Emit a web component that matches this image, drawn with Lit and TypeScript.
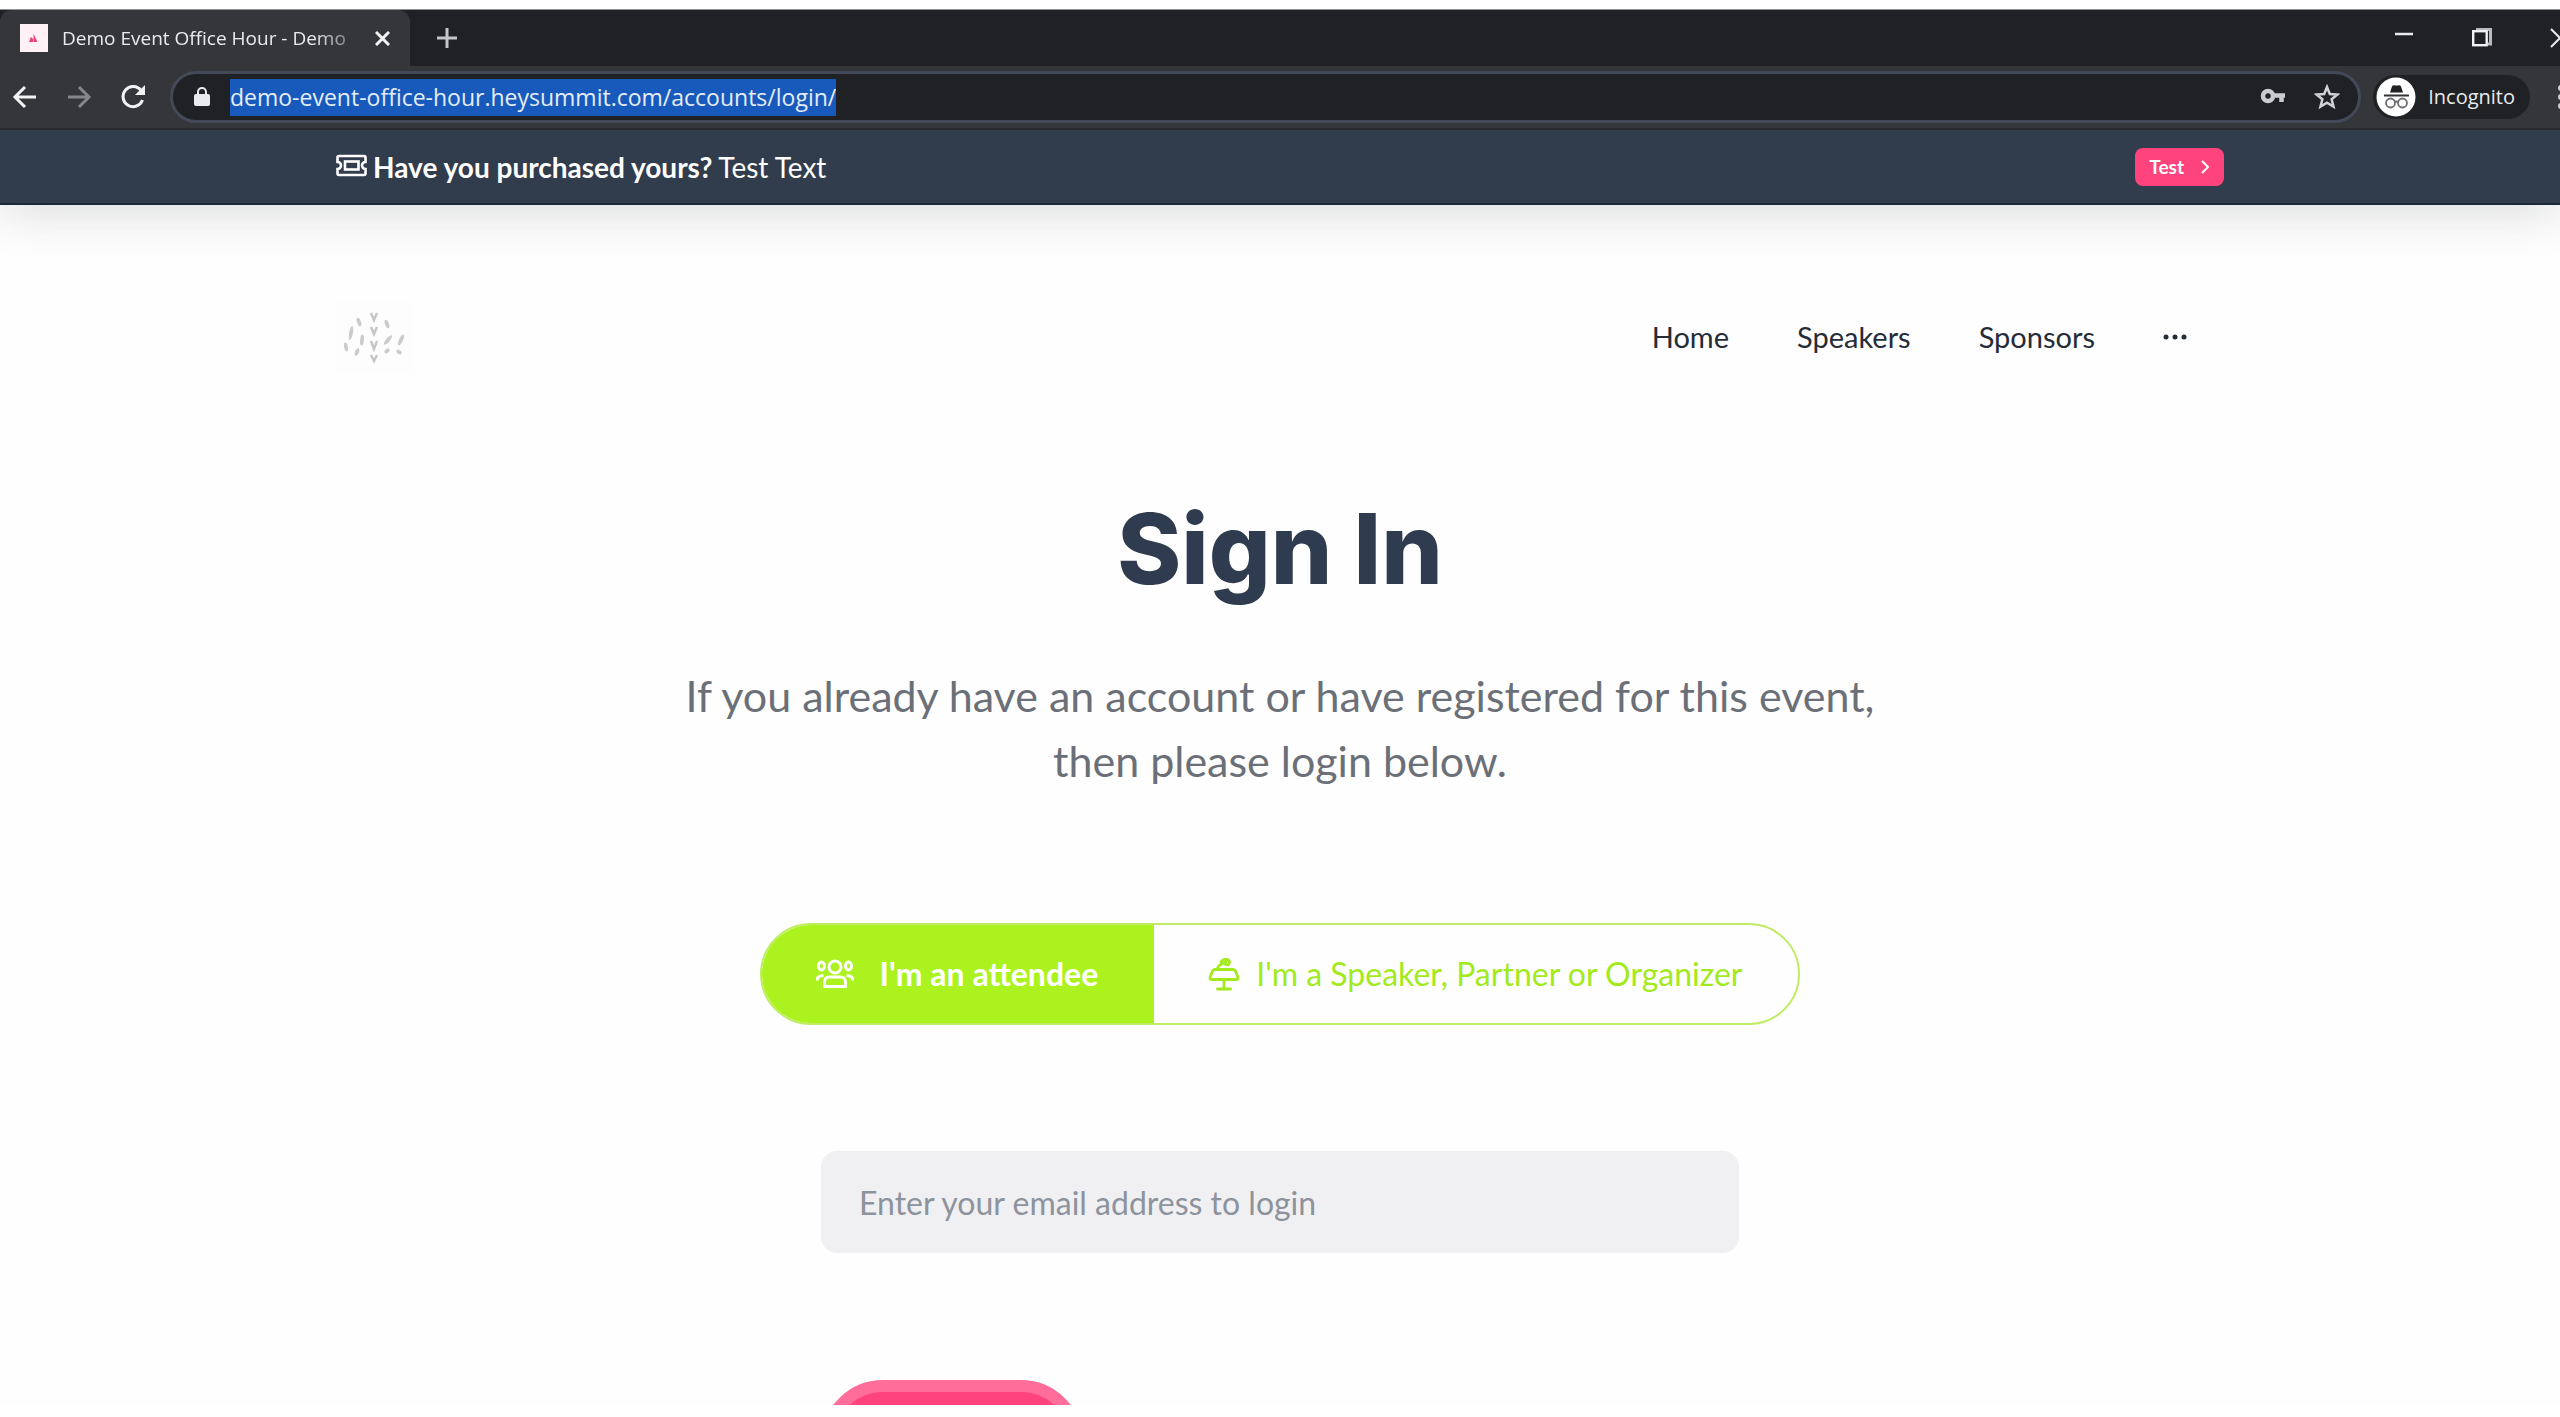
import { LitElement, html, css, svg } from "lit";
import { customElement } from "lit/decorators.js";

const resetStyles = css`
  *,
  *::before,
  *::after {
    box-sizing: border-box;
  }
  button,
  input {
    margin: 0;
    padding: 0;
    border: 0;
    background: none;
    color: inherit;
    font: inherit;
  }
  a {
    color: inherit;
    text-decoration: none;
  }
  svg {
    display: block;
    flex: none;
  }
`;

@customElement("browser-chrome")
export class BrowserChrome extends LitElement {
  static styles = [
    resetStyles,
    css`
      :host {
        display: block;
        overflow: hidden;
        background: #202124;
        color: #e8eaed;
        font: 20px/28px "Open Sans", "Noto Sans", sans-serif;
        border-top: 1px solid #8f9092;
      }
      .strip {
        display: flex;
        align-items: stretch;
        height: 56px;
      }
      .tab {
        display: flex;
        align-items: center;
        width: 410px;
        padding: 0 20px;
        background: #35363a;
        border-radius: 12px 12px 0 0;
      }
      .title {
        flex: 1;
        margin-left: 14px;
        white-space: nowrap;
        font-size: 19px;
        mask-image: linear-gradient(to right, #000 86%, rgba(0, 0, 0, 0.3));
      }
      .tab-close {
        margin-left: 20px;
      }
      .new-tab {
        margin-left: 26px;
      }
      .window-buttons {
        display: flex;
        gap: 58px;
        margin-left: auto;
        margin-right: -10px;
      }
      .bar {
        display: flex;
        align-items: center;
        height: 64px;
        padding-left: 12px;
        background: #35363a;
        border-bottom: 2px solid #292b30;
      }
      .nav {
        display: flex;
        gap: 28px;
        margin-right: 24px;
      }
      .address {
        flex: 1;
        display: flex;
        align-items: center;
        height: 52px;
        padding: 0 18px;
        border: 3px solid #434958;
        border-radius: 26px;
        background: #202124;
      }
      .url {
        field-sizing: content;
        height: 37px;
        margin-left: 17px;
        background: #185abc;
        color: #e4ecf8;
        font-size: 23px;
      }
      .tools {
        display: flex;
        align-items: center;
        gap: 28px;
        margin-left: auto;
      }
      .profile {
        display: flex;
        align-items: center;
        gap: 12px;
        height: 44px;
        margin: 0 28px 0 12px;
        padding: 0 15px 0 3px;
        border-radius: 22px;
        background: #202124;
      }
      .more {
        margin-right: -4px;
      }
    `,
  ];

  render() {
    return html`
      <div class="strip">
        <div class="tab">
          <svg width="28" height="28" viewBox="0 0 28 28">
            <rect width="28" height="28" fill="#fff1f5" />
            <path d="M9 18l2-5 2 2v3z M13.500 10l4 8h-4z" fill="#f03c78" />
          </svg>
          <span class="title">Demo Event Office Hour - Demo</span>
          <button class="tab-close" aria-label="Close tab">
            <svg width="15" height="15" viewBox="0 0 15 15">
              <path d="M1 1l13 13M14 1L1 14" stroke="#f1f3f4" stroke-width="3" />
            </svg>
          </button>
        </div>
        <button class="new-tab" aria-label="New tab">
          <svg width="22" height="22" viewBox="0 0 22 22">
            <path d="M11 1v20M1 11h20" stroke="#c3c5c8" stroke-width="3" />
          </svg>
        </button>
        <div class="window-buttons">
          <button aria-label="Minimize">
            <svg width="20" height="20" viewBox="0 0 20 20">
              <path d="M1 6h18" stroke="#e8eaed" stroke-width="2.500" />
            </svg>
          </button>
          <button aria-label="Restore">
            <svg width="20" height="20" viewBox="0 0 20 20" fill="none">
              <path d="M4 1.500h14.500V16H16" stroke="#b9bbbe" stroke-width="3" />
              <rect x="1.200" y="3.200" width="13.500" height="14" stroke="#f1f3f4" stroke-width="2.400" />
            </svg>
          </button>
          <button aria-label="Close window">
            <svg width="20" height="20" viewBox="0 0 20 20">
              <path d="M1 1l18 18M19 1L1 19" stroke="#e8eaed" stroke-width="2" />
            </svg>
          </button>
        </div>
      </div>
      <div class="bar">
        <div class="nav">
          <button aria-label="Back">
            <svg width="26" height="26" viewBox="0 0 26 26" fill="none">
              <path d="M24 13H3M13 3L3 13l10 10" stroke="#f1f3f4" stroke-width="3" />
            </svg>
          </button>
          <button aria-label="Forward">
            <svg width="26" height="26" viewBox="0 0 26 26" fill="none">
              <path d="M2 13h21M13 3l10 10-10 10" stroke="#85878b" stroke-width="3" />
            </svg>
          </button>
          <button aria-label="Reload">
            <svg width="26" height="26" viewBox="0 0 26 26" fill="none">
              <path d="M21 6.500A10 10 0 1 0 22.500 16" stroke="#f1f3f4" stroke-width="3" />
              <path d="M25 1v10H15z" fill="#f1f3f4" />
            </svg>
          </button>
        </div>
        <div class="address">
          <svg width="22" height="22" viewBox="0 0 22 22" fill="none">
            <rect x="3" y="8" width="16" height="12" rx="2" fill="#e8eaed" />
            <path d="M7 9V6a4 4 0 0 1 8 0v3" stroke="#e8eaed" stroke-width="2" />
          </svg>
          <input
            class="url"
            type="text"
            aria-label="Address"
            value="demo-event-office-hour.heysummit.com/accounts/login/"
          />
          <div class="tools">
            <button aria-label="Saved passwords">
              <svg width="26" height="20" viewBox="0 0 26 20" fill="none">
                <circle cx="8" cy="9" r="5" stroke="#c9cbce" stroke-width="4.500" />
                <path d="M13 8.500h12M21.500 8v7" stroke="#c9cbce" stroke-width="4.500" />
              </svg>
            </button>
            <button aria-label="Bookmark this page">
              <svg width="26" height="26" viewBox="0 0 26 26" fill="none">
                <path
                  d="M13 3l2.800 7 7.600.500-5.800 4.800 1.900 7.300L13 18.600l-6.500 4 1.900-7.300L2.600 10.500l7.600-.500z"
                  stroke="#d0d2d5"
                  stroke-width="2.500"
                />
              </svg>
            </button>
          </div>
        </div>
        <button class="profile">
          <svg width="40" height="40" viewBox="0 0 40 40" fill="none">
            <circle cx="20" cy="20" r="19.500" fill="#fff" />
            <path d="M14 15.500l2-6q1-2 3-1h3q2-1 3 1l2 6z" fill="#202124" />
            <path d="M8 18.500h25" stroke="#303134" stroke-width="2" />
            <circle cx="14.500" cy="26" r="4.500" stroke="#6b6d71" stroke-width="1.800" />
            <circle cx="26.500" cy="26" r="4.500" stroke="#6b6d71" stroke-width="1.800" />
            <path d="M18.500 25q2-1 4 0" stroke="#6b6d71" stroke-width="1.800" />
          </svg>
          Incognito
        </button>
        <button class="more" aria-label="More options">
          <svg width="6" height="24" viewBox="0 0 6 24" fill="#d0d2d5">
            <circle cx="3" cy="3" r="3" />
            <circle cx="3" cy="12" r="3" />
            <circle cx="3" cy="21" r="3" />
          </svg>
        </button>
      </div>
    `;
  }
}

@customElement("promo-banner")
export class PromoBanner extends LitElement {
  static styles = [
    resetStyles,
    css`
      :host {
        display: block;
        position: relative;
        background: #313c4d;
        color: #fff;
        border-bottom: 2px solid #1d2836;
        box-shadow: 0 8px 48px rgba(40, 45, 50, 0.16);
        font: 28px/40px Lato, "Open Sans", sans-serif;
      }
      .row {
        display: flex;
        align-items: center;
        justify-content: space-between;
        width: 74%;
        max-width: 1888px;
        min-height: 73px;
        margin: 0 auto;
      }
      .message {
        display: flex;
        align-items: center;
        gap: 6px;
        margin: 0;
      }
      .cta {
        display: flex;
        align-items: center;
        gap: 16px;
        height: 38px;
        padding: 0 14px;
        border-radius: 8px;
        background: #ff437c;
        font-size: 19px;
        font-weight: 700;
      }
    `,
  ];

  render() {
    return html`
      <div class="row">
        <p class="message">
          <svg width="31" height="26" viewBox="0 0 31 26" fill="none" stroke="#fff" stroke-width="2.600">
            <path
              d="M3 2h25q1.500 0 1.500 1.500V8a3.500 3.500 0 0 0 0 7v4.500q0 1.500-1.500 1.500H3q-1.500 0-1.500-1.500V15a3.500 3.500 0 0 0 0-7V3.500Q1.500 2 3 2z"
            />
            <rect x="9" y="7.500" width="13.500" height="8" />
          </svg>
          <strong>Have you purchased yours?</strong>
          <span>Test Text</span>
        </p>
        <a class="cta" href="#">
          Test
          <svg width="10" height="14" viewBox="0 0 10 14" fill="none">
            <path d="M2 1l6 6-6 6" stroke="#fff" stroke-width="2" />
          </svg>
        </a>
      </div>
    `;
  }
}

/* Petal fragments of the event mark: centre x, centre y, rotation, length. */
const petals = [
  [23, 21, -20, 9],
  [15, 32, 10, 14],
  [10, 46, -12, 9],
  [21, 51, 20, 8],
  [26, 39, 5, 11],
  [51, 23, -20, 9],
  [52, 39, 40, 12],
  [65, 39, 25, 12],
  [63, 51, -50, 6],
  [51, 50, 45, 6],
];

/* Paired leaves down the middle of the mark: top y, height. */
const leaves = [
  [12, 7],
  [26, 7],
  [40, 8],
  [54, 6],
];

@customElement("site-header")
export class SiteHeader extends LitElement {
  static styles = [
    resetStyles,
    css`
      :host {
        display: block;
        font: 29px/36px Lato, "Open Sans", sans-serif;
        color: #252c38;
      }
      .row {
        display: flex;
        align-items: center;
        justify-content: space-between;
        width: 74%;
        max-width: 1888px;
        margin: 0 auto;
        padding: 96px 0 0;
      }
      .menu {
        display: flex;
        align-items: center;
        gap: 68px;
        padding-right: 37px;
      }
    `,
  ];

  render() {
    return html`
      <div class="row">
        <a href="#" aria-label="Demo Event Office Hour">
          <svg width="78" height="72" viewBox="0 0 78 72" fill="none">
            <rect width="78" height="72" fill="#fdfdfd" />
            ${petals.map(
              ([x, y, angle, length]) => svg`
                <ellipse cx=${x} cy=${y} rx="1.900" ry=${length / 2} fill="#cbcbcb"
                  transform="rotate(${angle} ${x} ${y})" />`
            )}
            ${leaves.map(
              ([y, height]) => svg`
                <path d="M35 ${y}l3 ${height}L41 ${y}" stroke="#c6c6c6" stroke-width="2.500" />`
            )}
          </svg>
        </a>
        <nav class="menu">
          <a href="#">Home</a>
          <a href="#">Speakers</a>
          <a href="#">Sponsors</a>
          <button aria-label="More pages">
            <svg width="24" height="6" viewBox="0 0 24 6" fill="#252c38">
              <circle cx="3" cy="3" r="2.500" />
              <circle cx="12" cy="3" r="2.500" />
              <circle cx="21" cy="3" r="2.500" />
            </svg>
          </button>
        </nav>
      </div>
    `;
  }
}

@customElement("sign-in-form")
export class SignInForm extends LitElement {
  static styles = [
    resetStyles,
    css`
      :host {
        display: flex;
        flex-direction: column;
        align-items: center;
        padding-top: 112px;
        font: 32px/40px Lato, "Open Sans", sans-serif;
      }
      .heading {
        margin: 0;
        color: #2f3b4e;
        font-family: Inter, Lato, sans-serif;
        font-size: 97px;
        font-weight: 800;
        line-height: 128px;
      }
      .intro {
        max-width: 1240px;
        margin: 50px 0 0;
        color: #6b7078;
        font-size: 43px;
        line-height: 65px;
        text-align: center;
      }
      .roles {
        display: flex;
        height: 102px;
        margin-top: 130px;
        overflow: hidden;
        border: 2px solid #bfec62;
        border-radius: 51px;
        color: #a2ea1c;
      }
      .role {
        display: flex;
        align-items: center;
        gap: 16px;
        padding: 0 56px 0 54px;
      }
      .role.active {
        gap: 26px;
        background: #abf21f;
        color: #fff;
        font-weight: 700;
      }
      .fields {
        display: flex;
        flex-direction: column;
        align-items: flex-start;
        width: 36%;
        min-width: 640px;
        max-width: 918px;
        margin-top: 126px;
      }
      .email {
        width: 100%;
        height: 102px;
        padding: 0 38px;
        border-radius: 16px;
        background: #f0f0f3;
        color: #2f3b4e;
      }
      .email::placeholder {
        color: #8d939c;
        opacity: 1;
      }
      .submit {
        width: 262px;
        height: 124px;
        margin-top: 127px;
        border: 12px solid #ff6d9b;
        border-radius: 62px;
        background: #ff437c;
      }
    `,
  ];

  render() {
    return html`
      <h1 class="heading">Sign In</h1>
      <p class="intro">
        If you already have an account or have registered for this event,<br />
        then please login below.
      </p>
      <div class="roles">
        <button class="role active" aria-pressed="true">
          <svg width="38" height="30" viewBox="0 0 38 30" fill="none" stroke="currentColor" stroke-width="3">
            <circle cx="19" cy="8" r="6" />
            <ellipse cx="5.500" cy="7" rx="3" ry="4" />
            <ellipse cx="32.500" cy="7" rx="3" ry="4" />
            <path d="M8.500 27.500v-4q0-5.500 5-5.500h11q5 0 5 5.500v4z" stroke-linejoin="round" />
            <path d="M1 21.500q0-4.500 6.500-5M37 21.500q0-4.500-6.500-5" />
          </svg>
          I'm an attendee
        </button>
        <button class="role" aria-pressed="false">
          <svg
            width="32"
            height="34"
            viewBox="0 0 32 34"
            fill="none"
            stroke="currentColor"
            stroke-width="2.800"
            stroke-linecap="round"
            stroke-linejoin="round"
          >
            <path d="M7 12.500h18q2 0 2.600 1.700L30 20.500q0 2-1.500 2h-25q-1.500 0-1.500-2l2.400-6.300Q5 12.500 7 12.500z" />
            <path d="M9 12q1-4 9-7" />
            <path d="M13 5q2-3 5.500-2.500T21.500 6q-1 2.500-4 1.500" />
            <path d="M16 23v9M9.500 32h13" />
          </svg>
          I'm a Speaker, Partner or Organizer
        </button>
      </div>
      <form class="fields">
        <input
          class="email"
          type="email"
          aria-label="Email address"
          placeholder="Enter your email address to login"
        />
        <button class="submit" type="submit" aria-label="Login"></button>
      </form>
    `;
  }
}

@customElement("app-root")
export class AppRoot extends LitElement {
  static styles = css`
    :host {
      display: flex;
      flex-direction: column;
      box-sizing: border-box;
      height: 100vh;
      padding: 9px 0 12px;
      background: #fff;
    }
    .page {
      flex: 1;
      min-height: 0;
      overflow: hidden;
      background: #fefefe;
    }
  `;

  render() {
    return html`
      <browser-chrome></browser-chrome>
      <div class="page">
        <promo-banner></promo-banner>
        <site-header></site-header>
        <sign-in-form></sign-in-form>
      </div>
    `;
  }
}
